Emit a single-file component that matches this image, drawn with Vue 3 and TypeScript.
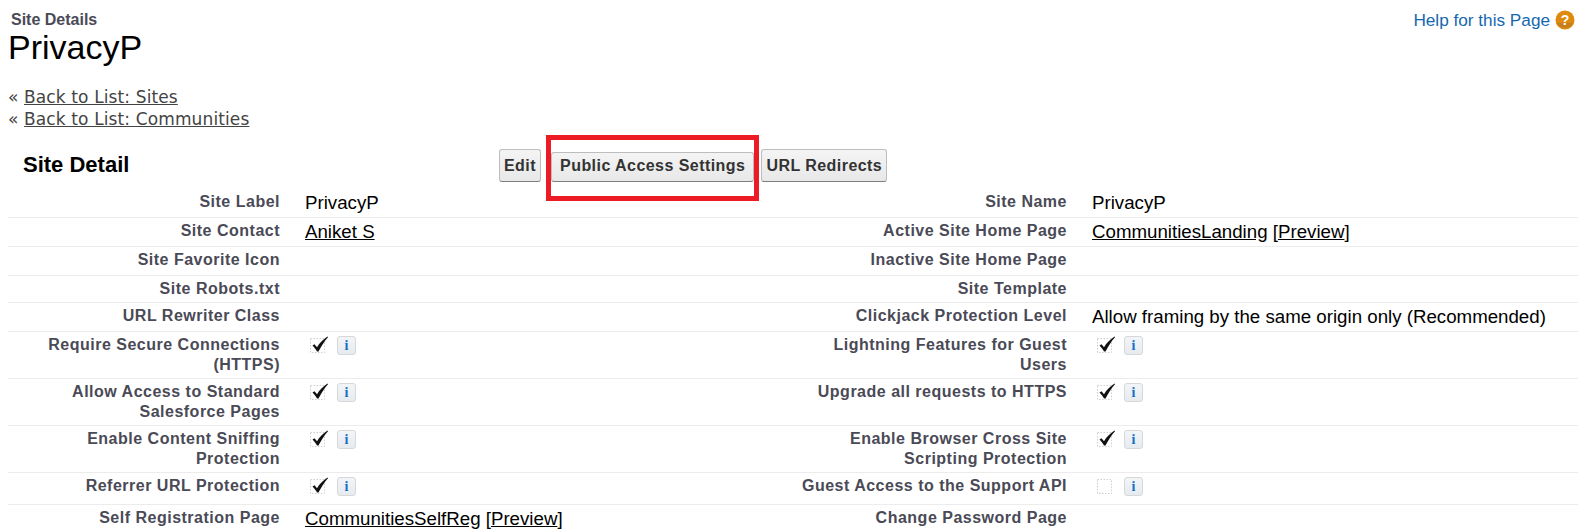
<script setup lang="ts">
interface Val { text?: string; link?: string; preview?: boolean; check?: boolean; info?: boolean }
interface Row { h: number; l1: string; v1: Val; l2: string; v2: Val }
const rows: Row[] = [
  { h: 30, l1: 'Site Label', v1: { text: 'PrivacyP' }, l2: 'Site Name', v2: { text: 'PrivacyP' } },
  { h: 29, l1: 'Site Contact', v1: { link: 'Aniket S' }, l2: 'Active Site Home Page', v2: { link: 'CommunitiesLanding', preview: true } },
  { h: 29, l1: 'Site Favorite Icon', v1: {}, l2: 'Inactive Site Home Page', v2: {} },
  { h: 27, l1: 'Site Robots.txt', v1: {}, l2: 'Site Template', v2: {} },
  { h: 29, l1: 'URL Rewriter Class', v1: {}, l2: 'Clickjack Protection Level', v2: { text: 'Allow framing by the same origin only (Recommended)' } },
  { h: 47, l1: 'Require Secure Connections (HTTPS)', v1: { check: true, info: true }, l2: 'Lightning Features for Guest Users', v2: { check: true, info: true } },
  { h: 47, l1: 'Allow Access to Standard Salesforce Pages', v1: { check: true, info: true }, l2: 'Upgrade all requests to HTTPS', v2: { check: true, info: true } },
  { h: 47, l1: 'Enable Content Sniffing Protection', v1: { check: true, info: true }, l2: 'Enable Browser Cross Site Scripting Protection', v2: { check: true, info: true } },
  { h: 32, l1: 'Referrer URL Protection', v1: { check: true, info: true }, l2: 'Guest Access to the Support API', v2: { check: false, info: true } },
  { h: 30, l1: 'Self Registration Page', v1: { link: 'CommunitiesSelfReg', preview: true }, l2: 'Change Password Page', v2: {} },
]
const cells = (r: Row) => [{ l: r.l1, v: r.v1 }, { l: r.l2, v: r.v2 }]
</script>

<template>
  <div class="page">
    <header class="head">
      <div>
        <div class="crumb">Site Details</div>
        <h1 class="title">PrivacyP</h1>
      </div>
      <a class="help">Help for this Page
        <svg class="help-icon" width="20" height="20" viewBox="0 0 20 20">
          <circle cx="10" cy="10" r="9.5" fill="#dd8a0e" />
          <path d="M2 13a9 9 0 0 0 16 0z" fill="#b9772a" opacity=".6" />
          <text x="10" y="15" text-anchor="middle" class="q">?</text>
        </svg>
      </a>
    </header>
    <div class="backs">
      <div>« <a>Back to List: Sites</a></div>
      <div>« <a>Back to List: Communities</a></div>
    </div>
    <section class="block">
      <div class="block-head">
        <h2>Site Detail</h2>
        <div class="btns">
          <button>Edit</button>
          <span class="hl"><button class="mid">Public Access Settings</button></span>
          <button>URL Redirects</button>
        </div>
      </div>
      <div v-for="r in rows" :key="r.l1" class="row" :style="{ height: r.h + 'px' }">
        <template v-for="c in cells(r)" :key="c.l">
          <div class="lab">{{ c.l }}</div>
          <div class="val">
            <template v-if="c.v.text">{{ c.v.text }}</template>
            <template v-if="c.v.link"><a>{{ c.v.link }}</a></template>
            <template v-if="c.v.preview"> [<a>Preview</a>]</template>
            <span v-if="c.v.info" class="flags">
              <svg width="21" height="18" viewBox="0 0 21 18" class="chk">
                <rect x="1.5" y="2.5" width="14" height="14" fill="none" stroke="#cfcfcf" stroke-dasharray="1.5 1.5" />
                <path v-if="c.v.check" d="M3.500 9.500l2-1.300 2.500 3C10.500 7 14.500 3 18.500 .5l.5.8C15.500 5 12.500 10 9.500 15.500H8C7 13.500 5.300 11.300 3.500 9.500z" fill="#111" />
              </svg>
              <span class="info">i</span>
            </span>
          </div>
        </template>
      </div>
    </section>
  </div>
</template>

<style scoped>
.page { width: 1578px; height: 532px; overflow: hidden; background: #fff; font-family: "Liberation Sans", Arial, sans-serif; color: #000; box-sizing: border-box; }
.head { display: flex; justify-content: space-between; padding: 11px 3px 0 8px; height: 86px; box-sizing: border-box; }
.crumb { font-size: 16px; line-height: 17px; font-weight: 700; color: #4a4a56; padding-left: 3px; }
.title { margin: 0; font-size: 34px; line-height: 38px; font-weight: 400; }
.help { font-size: 17.2px; line-height: 18px; color: #1468b0; display: flex; align-items: center; gap: 5px; height: 18px; padding-top: 0; }
.help-icon { display: block; }
.q { font: 700 14px "Liberation Sans", sans-serif; fill: #fff; }
.backs { padding-left: 8px; font-family: "DejaVu Sans", sans-serif; font-size: 17px; letter-spacing: .12px; line-height: 22px; color: #444; height: 48px; }
.backs a { text-decoration: underline; color: #444; }
.block { margin-left: 8px; }
.block-head { display: flex; height: 54px; box-sizing: border-box; align-items: flex-start; }
.block-head h2 { margin: 0; width: 491px; padding: 19px 0 0 15px; box-sizing: border-box; font-size: 22px; line-height: 24px; font-weight: 700; }
.btns { display: flex; align-items: flex-start; gap: 8px; margin-top: 15px; }
button { font: 700 16px "Liberation Sans", sans-serif; letter-spacing: .45px; color: #333; height: 33px; padding: 0 4px; border: 1px solid #bdbdbd; border-bottom-color: #7f7f7f; border-radius: 3px; background: linear-gradient(#f4f4f4, #e8e8e8); white-space: nowrap; }
.hl { position: relative; display: block; margin: 3px -1px 0 2px; }
.hl::after { content: ""; position: absolute; left: -5px; top: -17px; right: -5px; bottom: -19px; border: 5px solid #ed1c24; pointer-events: none; }
.mid { display: block; height: 30px; padding: 0 8px 2px; }
.row { display: grid; grid-template-columns: 272px 516px 271px 1fr; border-bottom: 1px solid #ececec; box-sizing: border-box; }
.lab { text-align: right; font-size: 16px; line-height: 20px; font-weight: 700; color: #4a4a56; letter-spacing: .5px; padding-top: 3px; }
.val { padding: 3px 0 0 25px; font-size: 18.7px; line-height: 22px; white-space: nowrap; }
.block-head + .row .lab { padding-top: 4px; }
.block-head + .row .val { padding-top: 4px; }
.val a { text-decoration: underline; }
.flags { display: flex; align-items: flex-start; gap: 7px; padding-top: 1px; margin-left: 4px; }
.chk { display: block; }
.info { width: 19px; height: 19px; box-sizing: border-box; border: 1px solid #d8d8d8; border-radius: 3px; background: linear-gradient(#f2f5f8, #e6ebef); color: #1a70c8; font: 700 14px/17px "Liberation Serif", serif; text-align: center; }
</style>
